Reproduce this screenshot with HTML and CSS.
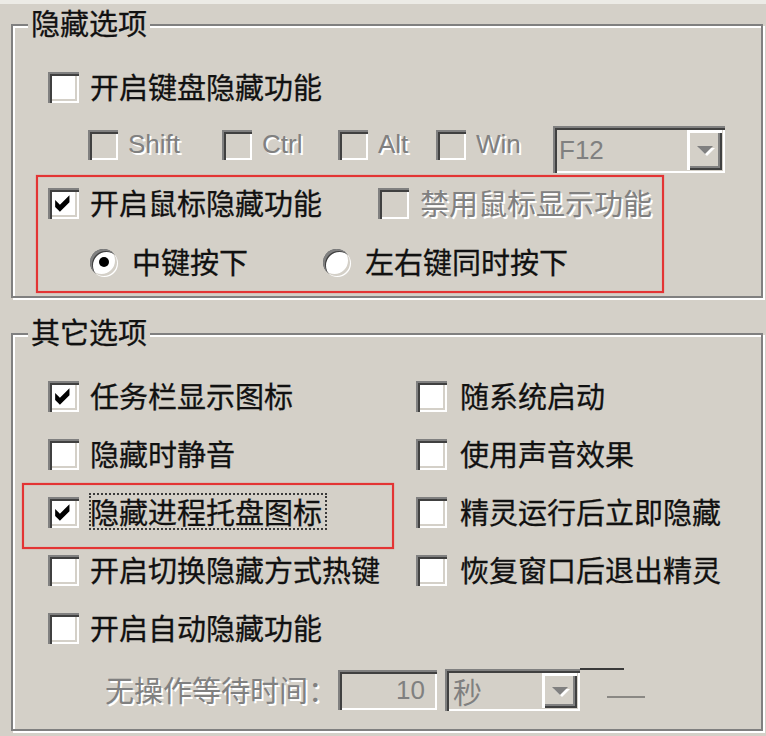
FILE: index.html
```html
<!DOCTYPE html>
<html lang="zh-CN">
<head>
<meta charset="utf-8">
<title>隐藏选项</title>
<link rel="stylesheet" href="styles.css">
</head>
<body>
<section class="group g1">
  <div class="group-title">隐藏选项</div>
  <div class="row">
    <label class="opt"><span class="cb"></span><span class="lbl">开启键盘隐藏功能</span></label>
  </div>
  <div class="row keys">
    <label class="opt dis k1"><span class="cb"></span><span class="lbl latin">Shift</span></label>
    <label class="opt dis k2"><span class="cb"></span><span class="lbl latin">Ctrl</span></label>
    <label class="opt dis k3"><span class="cb"></span><span class="lbl latin">Alt</span></label>
    <label class="opt dis k4"><span class="cb"></span><span class="lbl latin">Win</span></label>
    <div class="combo f12"><span class="combo-text latin">F12</span><span class="drop"><span class="arrow"></span></span></div>
  </div>
  <div class="hl">
    <div class="row r3">
      <label class="opt w330"><span class="cb"><svg viewBox="0 0 13 13" class="tick"><polygon points="3,5 5,7 9,3 9,6 5,10 3,8"/></svg></span><span class="lbl">开启鼠标隐藏功能</span></label>
      <label class="opt dis"><span class="cb"></span><span class="lbl">禁用鼠标显示功能</span></label>
    </div>
    <div class="row r4">
      <label class="opt w233"><span class="radio on"></span><span class="lbl">中键按下</span></label>
      <label class="opt"><span class="radio"></span><span class="lbl">左右键同时按下</span></label>
    </div>
  </div>
</section>

<section class="group g2">
  <div class="group-title">其它选项</div>
  <div class="grid">
    <label class="opt"><span class="cb"><svg viewBox="0 0 13 13" class="tick"><polygon points="3,5 5,7 9,3 9,6 5,10 3,8"/></svg></span><span class="lbl">任务栏显示图标</span></label>
    <label class="opt right"><span class="cb"></span><span class="lbl">随系统启动</span></label>
    <label class="opt"><span class="cb"></span><span class="lbl">隐藏时静音</span></label>
    <label class="opt right"><span class="cb"></span><span class="lbl">使用声音效果</span></label>
    <label class="opt mark"><span class="cb"><svg viewBox="0 0 13 13" class="tick"><polygon points="3,5 5,7 9,3 9,6 5,10 3,8"/></svg></span><span class="lbl focus">隐藏进程托盘图标</span></label>
    <label class="opt right"><span class="cb"></span><span class="lbl">精灵运行后立即隐藏</span></label>
    <label class="opt"><span class="cb"></span><span class="lbl">开启切换隐藏方式热键</span></label>
    <label class="opt right"><span class="cb"></span><span class="lbl">恢复窗口后退出精灵</span></label>
    <label class="opt"><span class="cb"></span><span class="lbl">开启自动隐藏功能</span></label>
  </div>
  <div class="wait">
    <span class="lbl gray">无操作等待时间：</span>
    <span class="edit latin">10</span>
    <div class="combo sec"><span class="combo-text">秒</span><span class="drop"><span class="arrow"></span></span></div>
  </div>
</section>
</body>
</html>
```

FILE: styles.css
```css
* { box-sizing: border-box; }
html, body { margin: 0; }
body {
  width: 766px;
  height: 736px;
  overflow: hidden;
  background: #d4d0c8;
  border-top: 4px solid #ecebe6;
  padding: 20px 0 0 11px;
  font-family: "Noto Sans CJK SC", "Noto Sans", sans-serif;
  font-size: 29px;
  color: #111;
}

.group {
  position: relative;
  width: 752px;
  border: 2px solid #808080;
  box-shadow: inset 2px 2px 0 #fff, 2px 2px 0 #fff;
  padding: 32px 0 0 35px;
}
.g1 { height: 274px; }
.g2 { height: 398px; margin-top: 35px; }

.group-title {
  position: absolute;
  left: 15px;
  top: -22px;
  padding: 0 3px;
  background: #d4d0c8;
  line-height: 36px;
  -webkit-text-stroke: 0.3px #111;
}

.row { display: flex; align-items: center; height: 58px; }
.opt { display: flex; align-items: center; flex: none; }
.lbl {
  line-height: 35px;
  white-space: nowrap;
  position: relative;
  top: -1px;
  -webkit-text-stroke: 0.3px currentColor;
}
.latin { font-family: "Liberation Sans", Arial, sans-serif; font-size: 26px; }

.cb {
  flex: none;
  width: 31px;
  height: 31px;
  margin-right: 11px;
  background: #fff;
  box-shadow: inset 2px 2px 0 #808080, inset 4px 4px 0 #404040,
              inset -2px -2px 0 #fff, inset -4px -4px 0 #d4d0c8;
}
.tick { display: block; width: 31px; height: 31px; fill: #000; }

.dis .cb { background: #d4d0c8; }
.dis .lbl, .gray {
  color: #808080;
  -webkit-text-stroke: 0;
  text-shadow: 2px 2px 0 #fff;
}

/* keyboard row */
.keys { padding-left: 40px; }
.keys .cb { width: 30px; height: 30px; margin-right: 10px; }
.k1 { width: 134px; }
.k2 { width: 116px; }
.k3 { width: 98px; }
.k4 { width: 117px; }

/* combo / edit */
.combo, .edit {
  display: flex;
  align-items: center;
  flex: none;
  background: #d4d0c8;
  box-shadow: inset 2px 2px 0 #808080, inset 4px 4px 0 #404040,
              inset -2px -2px 0 #fff, inset -4px -4px 0 #d4d0c8;
}
.combo { padding: 4px 3px 3px 4px; align-items: stretch; position: relative; }
.combo-text {
  display: flex;
  align-items: center;
  color: #808080;
  padding-left: 2px;
}
.drop {
  margin-left: auto;
  width: 35px;
  display: flex;
  align-items: center;
  justify-content: center;
  background: #d4d0c8;
  box-shadow: inset 3px 3px 0 #fff, inset -2px -2px 0 #404040, inset -4px -4px 0 #808080;
}
.arrow {
  width: 0;
  height: 0;
  border-left: 8px solid transparent;
  border-right: 8px solid transparent;
  border-top: 8px solid #808080;
  filter: drop-shadow(2px 2px 0 #fff);
}
.f12 { width: 172px; height: 47px; align-self: flex-start; margin-top: 10px; }

/* highlighted area */
.hl {
  margin: 1px 0 0 -12px;
  width: 628px;
  height: 118px;
  border: 2px solid #e33434;
  box-shadow: 0 0 1px rgba(230, 60, 60, 0.7), inset 0 0 1px rgba(230, 60, 60, 0.7);
}
.r3 { height: 52px; padding-left: 10px; }
.r4 { height: 58px; margin-top: 4px; padding-left: 52px; }
.w330 { width: 330px; }
.w233 { width: 233px; }

.radio {
  position: relative;
  flex: none;
  width: 27px;
  height: 27px;
  margin-right: 15px;
  border-radius: 50%;
  background: #fff;
  box-shadow: inset 2px 2px 0 #808080, inset 3px 3px 0 #404040,
              inset -2px -2px 0 #d4d0c8, 1px 1px 0 #fff;
}
.radio.on::after {
  content: "";
  position: absolute;
  left: 50%;
  top: 50%;
  width: 10px;
  height: 10px;
  margin: -5px 0 0 -5px;
  border-radius: 50%;
  background: #000;
}

/* other options */
.grid {
  display: grid;
  grid-template-columns: 368px 1fr;
  grid-auto-rows: 58px;
}
.right .cb { margin-right: 13px; }
.mark { position: relative; }
.mark::after {
  content: "";
  position: absolute;
  left: -26px;
  top: 0;
  width: 368px;
  height: 62px;
  border: 2px solid #e33434;
  box-shadow: 0 0 1px rgba(230, 60, 60, 0.7), inset 0 0 1px rgba(230, 60, 60, 0.7);
}
.focus { outline: 2px dotted #3a3a3a; outline-offset: -1px; padding-right: 4px; }

.wait {
  display: flex;
  align-items: center;
  height: 58px;
  margin-top: 4px;
  padding-left: 57px;
}
.edit {
  width: 99px;
  height: 40px;
  margin-left: 1px;
  justify-content: flex-end;
  padding-right: 12px;
  color: #808080;
}
.sec { width: 135px; height: 42px; margin-left: 8px; }
.sec .combo-text { padding-left: 4px; }
.sec::after {
  content: "";
  position: absolute;
  left: 100%;
  top: -1px;
  width: 44px;
  height: 2px;
  background: #3a3a3a;
}
.sec::before {
  content: "";
  position: absolute;
  left: calc(100% + 27px);
  top: 27px;
  width: 38px;
  height: 2px;
  background: #8a8884;
}
```
